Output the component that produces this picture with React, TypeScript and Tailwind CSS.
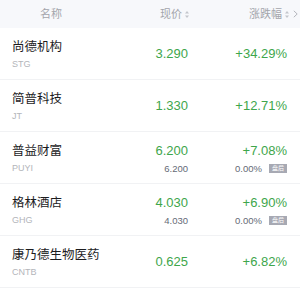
import React from "react";

type Row = {
  name: string;
  code: string;
  price: string;
  pct: string;
  sub?: { price: string; pct: string };
};

const rows: Row[] = [
  { name: "尚德机构", code: "STG", price: "3.290", pct: "+34.29%" },
  { name: "简普科技", code: "JT", price: "1.330", pct: "+12.71%" },
  { name: "普益财富", code: "PUYI", price: "6.200", pct: "+7.08%", sub: { price: "6.200", pct: "0.00%" } },
  { name: "格林酒店", code: "GHG", price: "4.030", pct: "+6.90%", sub: { price: "4.030", pct: "0.00%" } },
  { name: "康乃德生物医药", code: "CNTB", price: "0.625", pct: "+6.82%" },
];

const font = { fontFamily: '"Liberation Sans", "Noto Sans CJK SC", sans-serif' };

function SortIcon() {
  return (
    <svg width="4" height="7" viewBox="0 0 4 7" className="ml-[3px]">
      <path d="M2 0 L4 2.6 L0 2.6 Z" fill="#c4c6cc" />
      <path d="M2 7 L4 4.4 L0 4.4 Z" fill="#c4c6cc" />
    </svg>
  );
}

export default function App() {
  return (
    <div className="w-[300px] h-[300px] bg-white overflow-hidden" style={font}>
      <div className="h-[28px] bg-[#f7f8fb] flex items-center text-[11px] text-[#a3a5ab]">
        <div className="flex-1 pl-[40px]">名称</div>
        <div className="flex items-center justify-end w-[80px] mr-[1px]">
          <span>现价</span>
          <SortIcon />
        </div>
        <div className="flex items-center justify-end w-[110px] pr-[2px]">
          <span>涨跌幅</span>
          <SortIcon />
          <svg width="5" height="8" viewBox="0 0 5 8" className="ml-[4px]">
            <path d="M0.8 0.8 L4.2 4 L0.8 7.2" fill="none" stroke="#b4b6bc" strokeWidth="1" />
          </svg>
        </div>
      </div>
      {rows.map((r) => (
        <div key={r.code} className="h-[52px] border-b border-[#f1f2f4] flex pr-[13px]">
          <div className="flex-1 pl-[12px] pt-[9px]">
            <div className="text-[12.5px] leading-[20px] text-[#1c1c1e]">{r.name}</div>
            <div className="text-[9px] leading-[13px] mt-[1px] text-[#b3b5ba]">{r.code}</div>
          </div>
          {r.sub ? (
            <>
              <div className="w-[80px] pt-[9px] text-right">
                <div className="text-[13px] leading-[20px] text-[#3ea64b]">{r.price}</div>
                <div className="text-[9.5px] leading-[13px] mt-[1px] text-[#656a76]">{r.sub.price}</div>
              </div>
              <div className="w-[99px] pt-[9px] flex flex-col items-end">
                <div className="text-[13px] leading-[20px] text-[#3ea64b]">{r.pct}</div>
                <div className="flex items-center mt-[1px] h-[13px]">
                  <span className="text-[9.5px] leading-[13px] text-[#656a76]">{r.sub.pct}</span>
                  <span className="ml-[7px] w-[18px] h-[9px] bg-[#a7a9b3] text-white text-[6px] leading-[9px] text-center">盘后</span>
                </div>
              </div>
            </>
          ) : (
            <>
              <div className="w-[80px] flex items-center justify-end text-[13px] text-[#3ea64b]">{r.price}</div>
              <div className="w-[99px] flex items-center justify-end text-[13px] text-[#3ea64b]">{r.pct}</div>
            </>
          )}
        </div>
      ))}
    </div>
  );
}
